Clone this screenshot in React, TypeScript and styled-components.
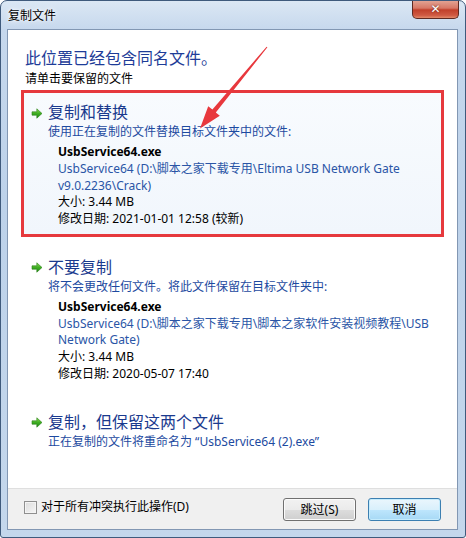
import React from 'react';
import styled, { createGlobalStyle, css } from 'styled-components';

const GlobalStyle = createGlobalStyle`
  html, body {
    margin: 0;
    padding: 0;
    background: #ffffff;
  }
  body {
    font-family: "Noto Sans", "Noto Sans CJK SC", sans-serif;
    font-size: 12px;
    color: #000000;
  }
`;

type FileInfo = {
  name: string;
  path: string[];
  size: string;
  modified: string;
};

type Choice = {
  title: string;
  desc: string;
  file?: FileInfo;
  hover?: boolean;
  marked?: boolean;
};

const choices: Choice[] = [
  {
    title: '复制和替换',
    desc: '使用正在复制的文件替换目标文件夹中的文件:',
    hover: true,
    marked: true,
    file: {
      name: 'UsbService64.exe',
      path: ['UsbService64 (D:\\脚本之家下载专用\\Eltima USB Network Gate', 'v9.0.2236\\Crack)'],
      size: '大小: 3.44 MB',
      modified: '修改日期: 2021-01-01 12:58 (较新)',
    },
  },
  {
    title: '不要复制',
    desc: '将不会更改任何文件。将此文件保留在目标文件夹中:',
    file: {
      name: 'UsbService64.exe',
      path: ['UsbService64 (D:\\脚本之家下载专用\\脚本之家软件安装视频教程\\USB', 'Network Gate)'],
      size: '大小: 3.44 MB',
      modified: '修改日期: 2020-05-07 17:40',
    },
  },
  {
    title: '复制，但保留这两个文件',
    desc: '正在复制的文件将重命名为 “UsbService64 (2).exe”',
  },
];

const GreenArrow = () => (
  <svg width="12" height="11" viewBox="0 0 12 11">
    <defs>
      <linearGradient id="ga" x1="0" y1="0" x2="0" y2="1">
        <stop offset="0" stopColor="#8fdc5a" />
        <stop offset="0.5" stopColor="#3fae22" />
        <stop offset="1" stopColor="#1f8a14" />
      </linearGradient>
    </defs>
    <path d="M1 3.8 H5.8 V0.8 L11 5.5 L5.8 10.2 V7.2 H1 Z" fill="url(#ga)" stroke="#2a7d1a" strokeWidth="0.6" />
  </svg>
);

// red annotation arrow drawn over the dialog
const RedPointer = () => (
  <Overlay width="466" height="538" viewBox="0 0 466 538">
    <polygon
      points="267.4,47.3 215.8,112.4 219.8,115.8 200,128.5 208.2,106.3 212.4,109.6 266.6,46.7"
      fill="#e8383d"
    />
  </Overlay>
);

export default function App() {
  return (
    <>
      <GlobalStyle />
      <Window>
        <TitleBar>
          <TitleText>复制文件</TitleText>
          <CloseButton>✕</CloseButton>
        </TitleBar>
        <Panel>
          <Body>
            <Heading>此位置已经包含同名文件。</Heading>
            <SubHeading>请单击要保留的文件</SubHeading>
            {choices.map((c, i) => (
              <CommandLink key={i} $hover={c.hover} $marked={c.marked}>
                <LinkHead>
                  <ArrowBox>
                    <GreenArrow />
                  </ArrowBox>
                  <LinkTitle>{c.title}</LinkTitle>
                </LinkHead>
                <LinkDesc>{c.desc}</LinkDesc>
                {c.file && (
                  <FileBlock>
                    <FileName>{c.file.name}</FileName>
                    {c.file.path.map((line, j) => (
                      <PathLine key={j}>{line}</PathLine>
                    ))}
                    <InfoLine>{c.file.size}</InfoLine>
                    <InfoLine>{c.file.modified}</InfoLine>
                  </FileBlock>
                )}
              </CommandLink>
            ))}
          </Body>
          <Footer>
            <CheckLabel>
              <CheckBox />
              对于所有冲突执行此操作(D)
            </CheckLabel>
            <Buttons>
              <Button>跳过(S)</Button>
              <Button $default>取消</Button>
            </Buttons>
          </Footer>
        </Panel>
        <RedPointer />
      </Window>
    </>
  );
}

const Window = styled.div`
  position: relative;
  width: 466px;
  height: 538px;
  box-sizing: border-box;
  border: 1px solid #3f5a7c;
  border-radius: 7px 7px 3px 3px;
  background: linear-gradient(180deg, #dbe7f4 0px, #c6d8ed 29px, #bdd2ea 200px, #c4d7ec 538px);
  padding: 0 7px 7px 6px;
  display: flex;
  flex-direction: column;
  overflow: hidden;
`;

const TitleBar = styled.div`
  height: 28px;
  display: flex;
  justify-content: space-between;
  align-items: flex-start;
`;

const TitleText = styled.div`
  padding: 7px 0 0 1px;
  font-size: 12px;
  line-height: 16px;
  color: #000000;
  text-shadow: 0 0 6px #ffffff, 0 0 3px #ffffff;
`;

const CloseButton = styled.div`
  width: 47px;
  height: 19px;
  margin-top: -1px;
  margin-right: -1px;
  box-sizing: border-box;
  border: 1px solid #5e2a22;
  border-top: none;
  border-radius: 0 0 5px 5px;
  background: linear-gradient(180deg, #e4a898 0%, #d77866 45%, #c1402b 55%, #cf5a43 85%, #e38a6a 100%);
  color: #ffffff;
  font-family: "DejaVu Sans", sans-serif;
  font-weight: bold;
  font-size: 12px;
  line-height: 18px;
  text-align: center;
  text-shadow: 0 0 2px #5a1a10;
`;

const Panel = styled.div`
  flex: 1;
  display: flex;
  flex-direction: column;
  background: #ffffff;
  border: 1px solid #8297b3;
`;

const Body = styled.div`
  flex: 1;
  padding: 18px 15px 0 15px;
  display: flex;
  flex-direction: column;
`;

const Heading = styled.div`
  padding-left: 2px;
  font-size: 16px;
  line-height: 20px;
  color: #1e3c98;
`;

const SubHeading = styled.div`
  margin-top: 3px;
  padding-left: 2px;
  font-size: 12px;
  line-height: 16px;
  color: #000000;
  margin-bottom: 5px;
`;

const CommandLink = styled.div<{ $hover?: boolean; $marked?: boolean }>`
  padding: 8px 8px 6px 7px;
  border: 1px solid transparent;
  border-radius: 3px;
  & + & {
    margin-top: 12px;
  }
  ${(p) =>
    p.$hover &&
    css`
      border-color: #d4e3f3;
      background: linear-gradient(180deg, #f8fbfe 0%, #f1f6fc 100%);
    `}
  ${(p) =>
    p.$marked &&
    css`
      border-radius: 0;
      outline: 3px solid #e6393d;
      outline-offset: -1px;
    `}
`;

const LinkHead = styled.div`
  display: flex;
  align-items: center;
  height: 22px;
`;

const ArrowBox = styled.div`
  width: 17px;
  display: flex;
  align-items: center;
  padding-top: 2px;
`;

const LinkTitle = styled.div`
  font-size: 16px;
  line-height: 22px;
  color: #1a3a8e;
`;

const LinkDesc = styled.div`
  padding-left: 17px;
  font-size: 12px;
  line-height: 18px;
  color: #1d4aa0;
`;

const FileBlock = styled.div`
  padding-left: 27px;
  margin-top: 3px;
  font-size: 12px;
  line-height: 16.75px;
  white-space: nowrap;
`;

const FileName = styled.div`
  font-weight: bold;
  color: #000000;
`;

const PathLine = styled.div`
  color: #2a55a6;
`;

const InfoLine = styled.div`
  color: #000000;
`;

const Footer = styled.div`
  height: 40px;
  border-top: 1px solid #dfdfdf;
  background: #f0f0f0;
  padding: 0 16px;
  display: flex;
  align-items: center;
  justify-content: space-between;
`;

const CheckLabel = styled.label`
  display: flex;
  align-items: center;
  gap: 4px;
  font-size: 12px;
  line-height: 16px;
  color: #000000;
  margin-top: -4px;
`;

const CheckBox = styled.span`
  width: 13px;
  height: 13px;
  box-sizing: border-box;
  border: 1px solid #8f8f8f;
  background: linear-gradient(135deg, #dcdcdc 0%, #f6f6f6 100%);
  box-shadow: inset 0 0 0 1px #f4f4f4;
`;

const Buttons = styled.div`
  display: flex;
  gap: 12px;
`;

const Button = styled.div<{ $default?: boolean }>`
  width: 73px;
  height: 23px;
  box-sizing: border-box;
  border: 1px solid #707070;
  border-radius: 3px;
  background: linear-gradient(180deg, #f2f2f2 0%, #ebebeb 50%, #dddddd 51%, #cfcfcf 100%);
  box-shadow: inset 0 0 0 1px #fbfbfb;
  font-size: 12px;
  line-height: 21px;
  text-align: center;
  color: #000000;
  ${(p) =>
    p.$default &&
    css`
      border-color: #3c7fb1;
      background: linear-gradient(180deg, #eaf6fd 0%, #d9f0fc 50%, #bee6fd 51%, #a7d9f5 100%);
      box-shadow: inset 0 0 0 1px #c5ecfd;
    `}
`;

const Overlay = styled.svg`
  position: absolute;
  left: -1px;
  top: -1px;
  pointer-events: none;
`;
